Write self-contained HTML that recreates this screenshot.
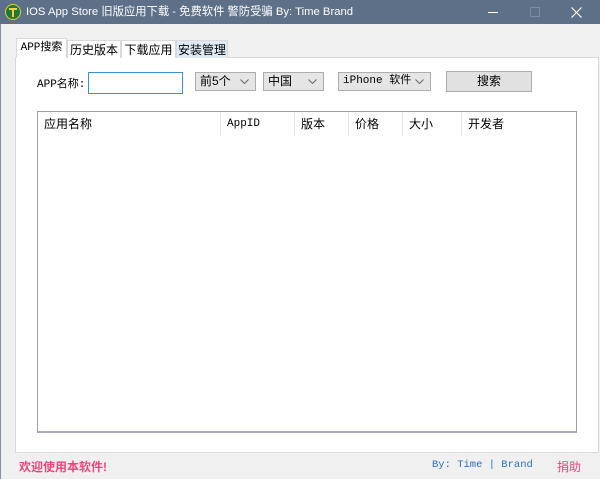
<!DOCTYPE html>
<html><head><meta charset="utf-8"><style>
*{margin:0;padding:0;box-sizing:border-box}
body{width:600px;height:479px;background:#f0f0f0;font-family:"Liberation Sans","Noto Sans CJK SC",sans-serif;font-size:12px;color:#000;position:relative;overflow:hidden}
.a{position:absolute}
.m{font-family:"Liberation Mono","Noto Sans CJK SC",monospace}
.title{left:0;top:0;width:600px;height:24px;background:#5e6f88;color:#fff;font-size:11.3px;line-height:24px}
.tab{top:40px;height:18px;line-height:18px;text-align:center;border:1px solid #d9d9d9;border-bottom:none;font-size:12px}
.combo{top:72px;height:19px;background:#e5e5e5;border:1px solid #adadad;line-height:17px;padding-left:4px;font-size:12px}
.combo svg{position:absolute;right:6px;top:6px}
.hd{top:112px;height:24px;line-height:24px;font-size:12px;border-right:1px solid #e5e5e5;padding-left:6px}
</style></head><body>
<div class="a title">
 <div class="a" style="left:5px;top:4px;width:16px;height:16px;border-radius:50%;background:#1c7a3a;border:1px solid #e8c63a"></div>
 <div class="a" style="left:9px;top:8px;width:8px;height:2px;background:#f4d23e"></div>
 <div class="a" style="left:12px;top:8px;width:2px;height:9px;background:#f4d23e"></div>
 <div class="a" style="left:26px;top:0">IOS App Store 旧版应用下载 - 免费软件 警防受骗 By: Time Brand</div>
 <div class="a" style="left:488px;top:12px;width:10px;height:1px;background:#fff"></div>
 <div class="a" style="left:530px;top:7px;width:10px;height:10px;border:1px solid #7c8aa0"></div>
 <svg class="a" style="left:571px;top:7px" width="11" height="11"><path d="M0.5 0.5L10.5 10.5M10.5 0.5L0.5 10.5" stroke="#fff" stroke-width="1.2"/></svg>
</div>
<div class="a" style="left:0;top:24px;width:1px;height:455px;background:#8592a6"></div>
<div class="a" style="left:15px;top:57px;width:584px;height:396px;background:#fff;border:1px solid #d9d9d9"></div>
<div class="a tab m" style="left:16px;width:51px;top:38px;height:20px;background:#fff;font-size:11px">APP搜索</div>
<div class="a tab" style="left:67px;width:54px;background:#fff">历史版本</div>
<div class="a tab" style="left:121px;width:55px;background:#fff">下载应用</div>
<div class="a tab" style="left:176px;width:52px;background:#dfeaf6">安装管理</div>
<div class="a m" style="left:37px;top:75px;font-size:11px">APP名称:</div>
<div class="a" style="left:88px;top:72px;width:95px;height:22px;border:1px solid #3f8fd8;background:#fff"></div>
<div class="a combo" style="left:195px;width:61px">前5个<svg width="9" height="5"><path d="M0.5 0.5L4.5 4.5L8.5 0.5" stroke="#666" fill="none"/></svg></div>
<div class="a combo" style="left:263px;width:61px">中国<svg width="9" height="5"><path d="M0.5 0.5L4.5 4.5L8.5 0.5" stroke="#666" fill="none"/></svg></div>
<div class="a combo m" style="left:338px;width:93px;font-size:11px">iPhone 软件<svg width="9" height="5"><path d="M0.5 0.5L4.5 4.5L8.5 0.5" stroke="#666" fill="none"/></svg></div>
<div class="a" style="left:446px;top:71px;width:86px;height:21px;background:#e1e1e1;border:1px solid #adadad;text-align:center;line-height:19px">搜索</div>
<div class="a" style="left:37px;top:111px;width:540px;height:322px;background:#fff;border:1px solid #a0a0a0;border-bottom:2px solid #a9acb4"></div>
<div class="a hd" style="left:38px;width:183px">应用名称</div>
<div class="a hd m" style="left:221px;width:74px;font-size:11px">AppID</div>
<div class="a hd" style="left:295px;width:54px">版本</div>
<div class="a hd" style="left:349px;width:54px">价格</div>
<div class="a hd" style="left:403px;width:59px">大小</div>
<div class="a hd" style="left:462px;width:113px;border-right:none">开发者</div>
<div class="a" style="left:19px;top:458px;color:#f0457a;font-weight:bold;font-size:12px">欢迎使用本软件!</div>
<div class="a m" style="left:432px;top:459px;color:#2c6fc2;font-size:10.5px">By: Time | Brand</div>
<div class="a" style="left:557px;top:458px;color:#f0457a;font-size:12px">捐助</div>
</body></html>
